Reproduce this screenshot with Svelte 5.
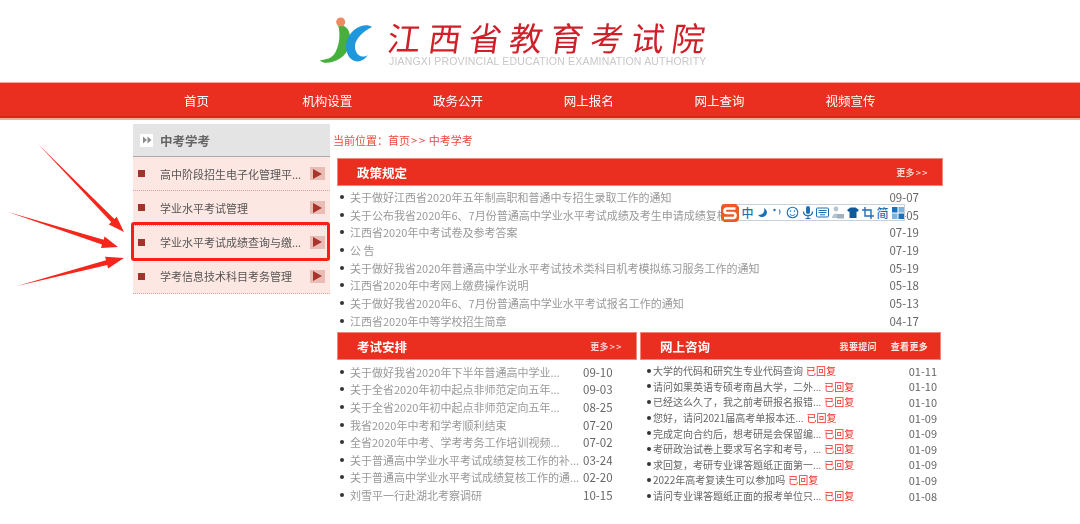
<script>
  const nav = ['首页','机构设置','政务公开','网上报名','网上查询','视频宣传'];
  const side = ['高中阶段招生电子化管理平...','学业水平考试管理','学业水平考试成绩查询与缴...','学考信息技术科目考务管理'];
  const policy = [
    ['关于做好江西省2020年五年制高职和普通中专招生录取工作的通知','09-07'],
    ['关于公布我省2020年6、7月份普通高中学业水平考试成绩及考生申请成绩复核','08-05'],
    ['江西省2020年中考试卷及参考答案','07-19'],
    ['公 告','07-19'],
    ['关于做好我省2020年普通高中学业水平考试技术类科目机考模拟练习服务工作的通知','05-19'],
    ['江西省2020年中考网上缴费操作说明','05-18'],
    ['关于做好我省2020年6、7月份普通高中学业水平考试报名工作的通知','05-13'],
    ['江西省2020年中等学校招生简章','04-17']
  ];
  const exams = [
    ['关于做好我省2020年下半年普通高中学业...','09-10'],
    ['关于全省2020年初中起点非师范定向五年...','09-03'],
    ['关于全省2020年初中起点非师范定向五年...','08-25'],
    ['我省2020年中考和学考顺利结束','07-20'],
    ['全省2020年中考、学考考务工作培训视频...','07-02'],
    ['关于普通高中学业水平考试成绩复核工作的补...','03-24'],
    ['关于普通高中学业水平考试成绩复核工作的通...','02-20'],
    ['刘雪平一行赴湖北考察调研','10-15']
  ];
  const asks = [
    ['大学的代码和研究生专业代码查询','01-11'],
    ['请问如果英语专硕考南昌大学，二外...','01-10'],
    ['已经这么久了，我之前考研报名报错...','01-10'],
    ['您好，请问2021届高考单报本还...','01-09'],
    ['完成定向合约后，想考研是会保留编...','01-09'],
    ['考研政治试卷上要求写名字和考号，...','01-09'],
    ['求回复，考研专业课答题纸正面第一...','01-09'],
    ['2022年高考复读生可以参加吗','01-09'],
    ['请问专业课答题纸正面的报考单位只...','01-08']
  ];
</script>

<div class="page">
  <header class="brand">
    <svg class="logo" viewBox="0 0 54 48" width="54" height="48" aria-hidden="true">
      <path d="M18 8 C24 7 30 12 30 20 C31 32 24 42 12 45 C7 46.500 2 46 0 43 C6 43 12 41 15 36 C19 29 21 18 18 8Z" fill="#47b03c"/>
      <path d="M52 10 C48 7 40 8 34 13 C26 20 24 30 28 38 C32 46 42 47 48 38 C42 42 36 38 35 31 C34 23 42 15 52 10Z" fill="#1e97dc"/>
      <circle cx="20.700" cy="5" r="4.500" fill="#ee8a60"/>
    </svg>
    <div class="wordmark">
      <div class="cn">江西省教育考试院</div>
      <div class="en">JIANGXI PROVINCIAL EDUCATION EXAMINATION AUTHORITY</div>
    </div>
  </header>

  <nav class="nav">
    {#each nav as n}<a href="#top">{n}</a>{/each}
  </nav>

  <div class="body">
    <aside class="side">
      <div class="side-head">
        <span class="chev"><svg width="12" height="12" viewBox="0 0 12 12"><path d="M2 2.500 6 6 2 9.500ZM6.500 2.500 10.500 6 6.500 9.500Z" fill="#8d8d8d"/></svg></span>
        <b>中考学考</b>
      </div>
      {#each side as s}
        <div class="side-item">
          <i class="sq"></i>
          <span>{s}</span>
          <em><svg width="9" height="10" viewBox="0 0 9 10"><path d="M0 0 9 5 0 10Z" fill="#a8352b"/></svg></em>
        </div>
      {/each}
    </aside>

    <main class="main">
      <div class="crumb">当前位置：首页<span class="gt">&gt;&gt;</span>中考学考</div>
      <section class="panel">
        <div class="bar"><h2>政策规定</h2><span class="more">更多<span class="gt">&gt;&gt;</span></span></div>
        <ul class="list policy">
          {#each policy as [t,d]}
            <li><span class="t">{t}</span><span class="d">{d}</span></li>
          {/each}
        </ul>
      </section>
      <div class="cols">
        <section class="panel left">
          <div class="bar"><h2>考试安排</h2><span class="more">更多<span class="gt">&gt;&gt;</span></span></div>
          <ul class="list exams">
            {#each exams as [t,d]}
              <li><span class="t">{t}</span><span class="d">{d}</span></li>
            {/each}
          </ul>
        </section>
        <section class="panel right">
          <div class="bar"><h2>网上咨询</h2><span class="more two"><span>我要提问</span><span>查看更多</span></span></div>
          <ul class="list asks">
            {#each asks as [t,d]}
              <li><span class="t">{t}</span><span class="r">已回复</span><span class="d">{d}</span></li>
            {/each}
          </ul>
        </section>
      </div>
    </main>
  </div>

  <div class="hl"></div>
  <svg class="arrows" width="140" height="160" viewBox="0 0 140 160" aria-hidden="true">
    <path d="M38 24 L111.200 102 L108.900 104.400 L124 112 L116.700 96.800 L114.400 99.100 Z" fill="#f5261c"/>
    <path d="M8 92 L102 124.600 L101 128 L118 127 L104.600 116.500 L103.600 119.800 Z" fill="#f5261c"/>
    <path d="M17 166 L107.200 145 L108.100 148.400 L124 138 L105.100 136.800 L106 140.200 Z" fill="#f5261c"/>
  </svg>

  <div class="ime">
    <svg class="s" width="20" height="20" viewBox="0 0 20 20"><path d="M5 1 H16 L19 4 V15 Q19 19 15 19 H4 L1 16 V5 Q1 1 5 1Z" fill="#ee5a24"/><path d="M15.500 5.500 H7 Q4.500 5.500 4.500 8 Q4.500 10 7 10 H13 Q15.500 10 15.500 12.500 Q15.500 15 13 15 H4" fill="none" stroke="#fff" stroke-width="2.600"/></svg>
    <span class="g">中</span>
    <svg width="11" height="11" viewBox="0 0 11 11"><path d="M7 1 C8 5 6 8 1 8 C3 11 9 11 10 6 C10 4 9 2 7 1Z" fill="#1d6fb8"/></svg>
    <svg width="11" height="11" viewBox="0 0 11 11"><circle cx="2.500" cy="3" r="1.200" fill="#1d6fb8"/><path d="M7 2 C9 3 9 6 7 8 L7.500 5 Z" fill="#1d6fb8"/></svg>
    <svg width="13" height="13" viewBox="0 0 13 13"><circle cx="6.500" cy="6.500" r="5.300" fill="none" stroke="#1d6fb8" stroke-width="1.100"/><circle cx="4.600" cy="5" r=".8" fill="#1d6fb8"/><circle cx="8.400" cy="5" r=".8" fill="#1d6fb8"/><path d="M3.800 8 C5 10 8 10 9.200 8" fill="none" stroke="#1d6fb8"/></svg>
    <svg width="12" height="13" viewBox="0 0 12 13"><rect x="4" y="0" width="4" height="8" rx="2" fill="#1d6fb8"/><path d="M1.500 5.500 C1.500 11 10.500 11 10.500 5.500 M6 10 V12.500 M3.500 12.500 H8.500" fill="none" stroke="#1d6fb8" stroke-width="1.200"/></svg>
    <svg width="13" height="11" viewBox="0 0 13 11"><rect x=".5" y="1" width="12" height="9" rx="1" fill="none" stroke="#1d6fb8"/><path d="M2.500 3.500 H10.500 M2.500 5.500 H10.500 M4 7.800 H9" stroke="#1d6fb8"/></svg>
    <svg width="13" height="13" viewBox="0 0 13 13"><circle cx="5" cy="3" r="2.400" fill="#b5c4d2"/><path d="M1 12 C1 6 9 6 9 12Z" fill="#b5c4d2"/><rect x="6" y="8" width="7" height="4.500" fill="#9fb0bf"/></svg>
    <svg width="12" height="11" viewBox="0 0 12 11"><path d="M3.500 .5 H8.500 L12 3 L10 5 L9.500 4.500 V11 H2.500 V4.500 L2 5 L0 3 Z" fill="#0f5a9c"/></svg>
    <svg width="12" height="12" viewBox="0 0 12 12"><path d="M3 0 V9 H12 M0 3 H9 V12" fill="none" stroke="#1d6fb8" stroke-width="1.400"/></svg>
    <span class="g">简</span>
    <svg width="12" height="12" viewBox="0 0 12 12"><rect width="5.500" height="5.500" fill="#1d6fb8"/><rect x="6.500" width="5.500" height="5.500" fill="#7fb3dd"/><rect y="6.500" width="5.500" height="5.500" fill="#7fb3dd"/><rect x="6.500" y="6.500" width="5.500" height="5.500" fill="#1d6fb8"/></svg>
  </div>
</div>

<style>
  :global(body) { margin: 0; background: #fff; }
  .page {
    position: relative;
    width: 1080px;
    height: 524px;
    overflow: hidden;
    font-family: "Noto Sans CJK SC", "Noto Sans", sans-serif;
    font-size: 11px;
    color: #777;
    filter: blur(0.45px);
  }
  ul { list-style: none; margin: 0; padding: 0; }
  h2 { margin: 0; font: inherit; }

  .brand { height: 82px; display: flex; align-items: flex-start; padding: 17px 0 0 320px; box-sizing: border-box; gap: 14px; }
  .logo { flex: none; }
  .wordmark { display: flex; flex-direction: column; padding-top: 4px; }
  .cn { font-size: 33px; line-height: 33px; letter-spacing: 7.600px; color: #cf1f28; font-weight: 400; white-space: nowrap; transform: skewX(-8deg); }
  .en { font-family: "Liberation Sans", sans-serif; font-size: 10.500px; line-height: 12px; margin-top: 1px; padding-left: 1px; color: #c8c8c8; white-space: nowrap; letter-spacing: .18px; }

  .nav { height: 38px; background: #ea2e1f; border-top: 1px solid #f6a79f; box-shadow: inset 0 -2px 0 #f6a79f, inset 0 -4px 0 #d92418; box-sizing: border-box; display: flex; padding: 0 0 2px 131px; align-items: center; }
  .nav a { width: 130.800px; text-align: center; color: #fff; text-decoration: none; font-size: 12.500px; }

  .body { display: flex; align-items: flex-start; padding: 4px 0 0 133px; }
  .side { width: 197px; flex: none; }
  .side-head { height: 33px; box-sizing: border-box; background: #e4e4e4; border-bottom: 1px solid #aaa; display: flex; align-items: center; color: #666; font-size: 12.500px; }
  .side-head b { font-weight: 700; }
  .chev { width: 13px; height: 13px; background: #fff; margin: 0 7px 0 7px; display: flex; align-items: center; justify-content: center; }
  .side-item { height: 34.250px; box-sizing: border-box; background: #fde7e3; border-bottom: 1px dotted #cfa9a3; display: flex; align-items: center; color: #555; }
  .sq { width: 7px; height: 7px; background: #a0342c; margin: 0 15px 0 5px; flex: none; }
  .side-item span { width: 150px; white-space: nowrap; flex: none; }
  .side-item em { width: 15px; height: 13px; background: #e9bdb5; display: flex; align-items: center; justify-content: center; flex: none; }

  .main { width: 610px; margin-left: 3px; flex: none; }
  .crumb { height: 34px; line-height: 32px; color: #ea4a3e; white-space: nowrap; }
  .crumb .gt { letter-spacing: 2px; margin: 0 1.500px 0 1px; }
  .bar { height: 28px; background: #ea2e1f; box-shadow: inset 0 0 0 1px #f4857c; color: #fff; display: flex; align-items: center; justify-content: space-between; box-sizing: border-box; padding: 0 14px 0 20px; }
  .bar h2 { font-size: 12.500px; font-weight: 700; }
  .more { font-size: 9px; font-weight: 500; color: #ffe9e6; letter-spacing: .3px; }
  .more .gt { letter-spacing: 1.500px; margin-left: 1px; }
  .more.two { display: flex; gap: 14px; font-weight: 700; margin-right: -1px; }

  .panel { margin-left: 4px; }
  .list li { display: flex; align-items: center; position: relative; white-space: nowrap; }
  .list li::before { content: ''; position: absolute; left: 3px; top: 50%; width: 4px; height: 4px; margin-top: -2px; background: #333; border-radius: 50%; }
  .t { color: #999; }
  .d { color: #666; margin-left: auto; font-size: 11.500px; }

  .policy { padding-top: 2px; height: 146px; box-sizing: border-box; }
  .policy li { height: 17.700px; padding-left: 13px; }
  .policy .d { padding-right: 24px; }

  .cols { display: flex; gap: 3px; margin-left: 4px; }
  .cols .panel { margin: 0; }
  .left { width: 300px; }
  .right { width: 301px; }
  .exams { padding-top: 3px; }
  .exams li { height: 17.600px; padding-left: 13px; }
  .exams .d { position: absolute; left: 246px; }
  .asks { padding-top: 3px; }
  .asks li { height: 15.600px; padding-left: 13px; font-size: 10px; }
  .asks li::before { left: 7px; }
  .asks .t { color: #666; }
  .r { color: #f02c22; margin-left: 3px; }
  .asks .d { padding-right: 4px; font-size: 11px; }

  .hl { position: absolute; left: 131px; top: 222px; width: 193px; height: 33px; border: 3px solid #fa1e16; border-radius: 3px; }
  .arrows { position: absolute; left: 0; top: 120px; overflow: visible; }

  .ime { position: absolute; left: 722px; top: 204px; width: 183px; height: 17px; box-sizing: border-box; background: #fff; border: 1px solid #c8d0da; border-left: 0; display: grid; grid-template-columns: repeat(11, 15px); align-items: center; justify-items: center; padding-left: 18px; }
  .ime .s { position: absolute; left: -2px; top: -2px; }
  .g { color: #1d6fb8; font-size: 12px; font-weight: 500; line-height: 1; }
</style>
